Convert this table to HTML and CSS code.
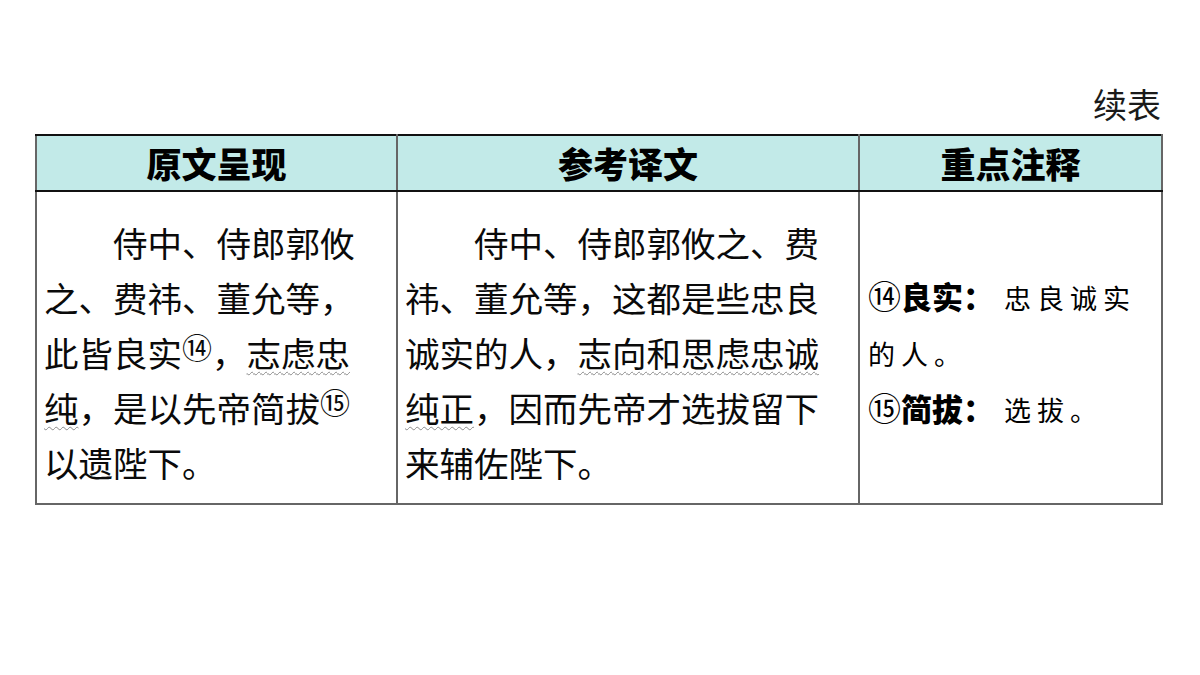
FILE: index.html
```html
<!DOCTYPE html>
<html lang="zh-CN">
<head>
<meta charset="utf-8">
<link rel="stylesheet" href="styles.css">
</head>
<body>
<div class="page">
  <div class="caption">续表</div>
  <table class="grid">
    <thead>
      <tr>
        <th class="c1">原文呈现</th>
        <th class="c2">参考译文</th>
        <th class="c3">重点注释</th>
      </tr>
    </thead>
    <tbody>
      <tr>
        <td class="c1 body"><p class="para">侍中、侍郎郭攸之、费祎、董允等，此皆良实<span class="num">⑭</span>，<span class="wavy">志虑忠纯</span>，是以先帝简拔<span class="num">⑮</span>以遗陛下。</p></td>
        <td class="c2 body"><p class="para">侍中、侍郎郭攸之、费祎、董允等，这都是些忠良诚实的人，<span class="wavy">志向和思虑忠诚纯正</span>，因而先帝才选拔留下来辅佐陛下。</p></td>
        <td class="c3 notes">
          <p class="note"><span class="nnum">⑭</span><b class="term">良实：</b><span class="expl">忠良诚实的人。</span></p>
          <p class="note"><span class="nnum">⑮</span><b class="term">简拔：</b><span class="expl">选拔。</span></p>
        </td>
      </tr>
    </tbody>
  </table>
</div>
</body>
</html>
```

FILE: styles.css
```css
html, body {
  margin: 0;
  padding: 0;
  background: #ffffff;
}
body {
  width: 1200px;
  height: 675px;
  overflow: hidden;
  font-family: "Noto Sans CJK SC", "Noto Sans", sans-serif;
  color: #000;
}
.page {
  padding: 83px 39px 0 35px;
}
.caption {
  text-align: right;
  font-size: 34px;
  line-height: 42px;
  color: #1a1a1a;
  margin-bottom: 9px;
}
.grid {
  border-collapse: collapse;
  width: 1126px;
  table-layout: fixed;
}
.grid th, .grid td {
  border-left: 2px solid #666;
  border-right: 2px solid #666;
}
.grid th {
  background: #c2eae8;
  border-top: 2px solid #111;
  border-bottom: 2px solid #111;
  height: 54px;
  padding: 0;
  font-size: 35px;
  font-weight: 900;
  text-align: center;
  vertical-align: middle;
  line-height: 40px;
}
.grid td {
  border-bottom: 2px solid #666;
  height: 313px;
  box-sizing: border-box;
}
.c1 { width: 359px; }
.c2 { width: 460px; }
.c3 { width: 301px; }
.body {
  vertical-align: top;
  padding: 23px 0 0 7px;
}
.c1.body { padding-right: 24px; }
.c2.body { padding-right: 18px; }
.para {
  margin: 0;
  font-size: 34.5px;
  line-height: 55px;
  text-indent: 2em;
  color: #0a0a0a;
}
.num {
  font-family: "DejaVu Serif", "Liberation Serif", serif;
  font-size: 30px;
  vertical-align: 8px;
  line-height: 1;
  display: inline-block;
  text-indent: 0;
}
.wavy {
  text-decoration: underline wavy #8a8a8a;
  text-decoration-thickness: 1px;
  text-underline-offset: 4px;
}
.notes {
  vertical-align: middle;
  padding: 10px 8px 0 8px;
}
.note {
  margin: 0;
  font-size: 31px;
  line-height: 54px;
}
.nnum {
  font-family: "DejaVu Serif", "Liberation Serif", serif;
  font-size: 33px;
  font-weight: 400;
  display: inline-block;
  text-indent: 0;
}
.term {
  font-weight: 900;
}
.expl {
  font-size: 27px;
  font-weight: 400;
  letter-spacing: 6px;
  padding-left: 10px;
}
```
